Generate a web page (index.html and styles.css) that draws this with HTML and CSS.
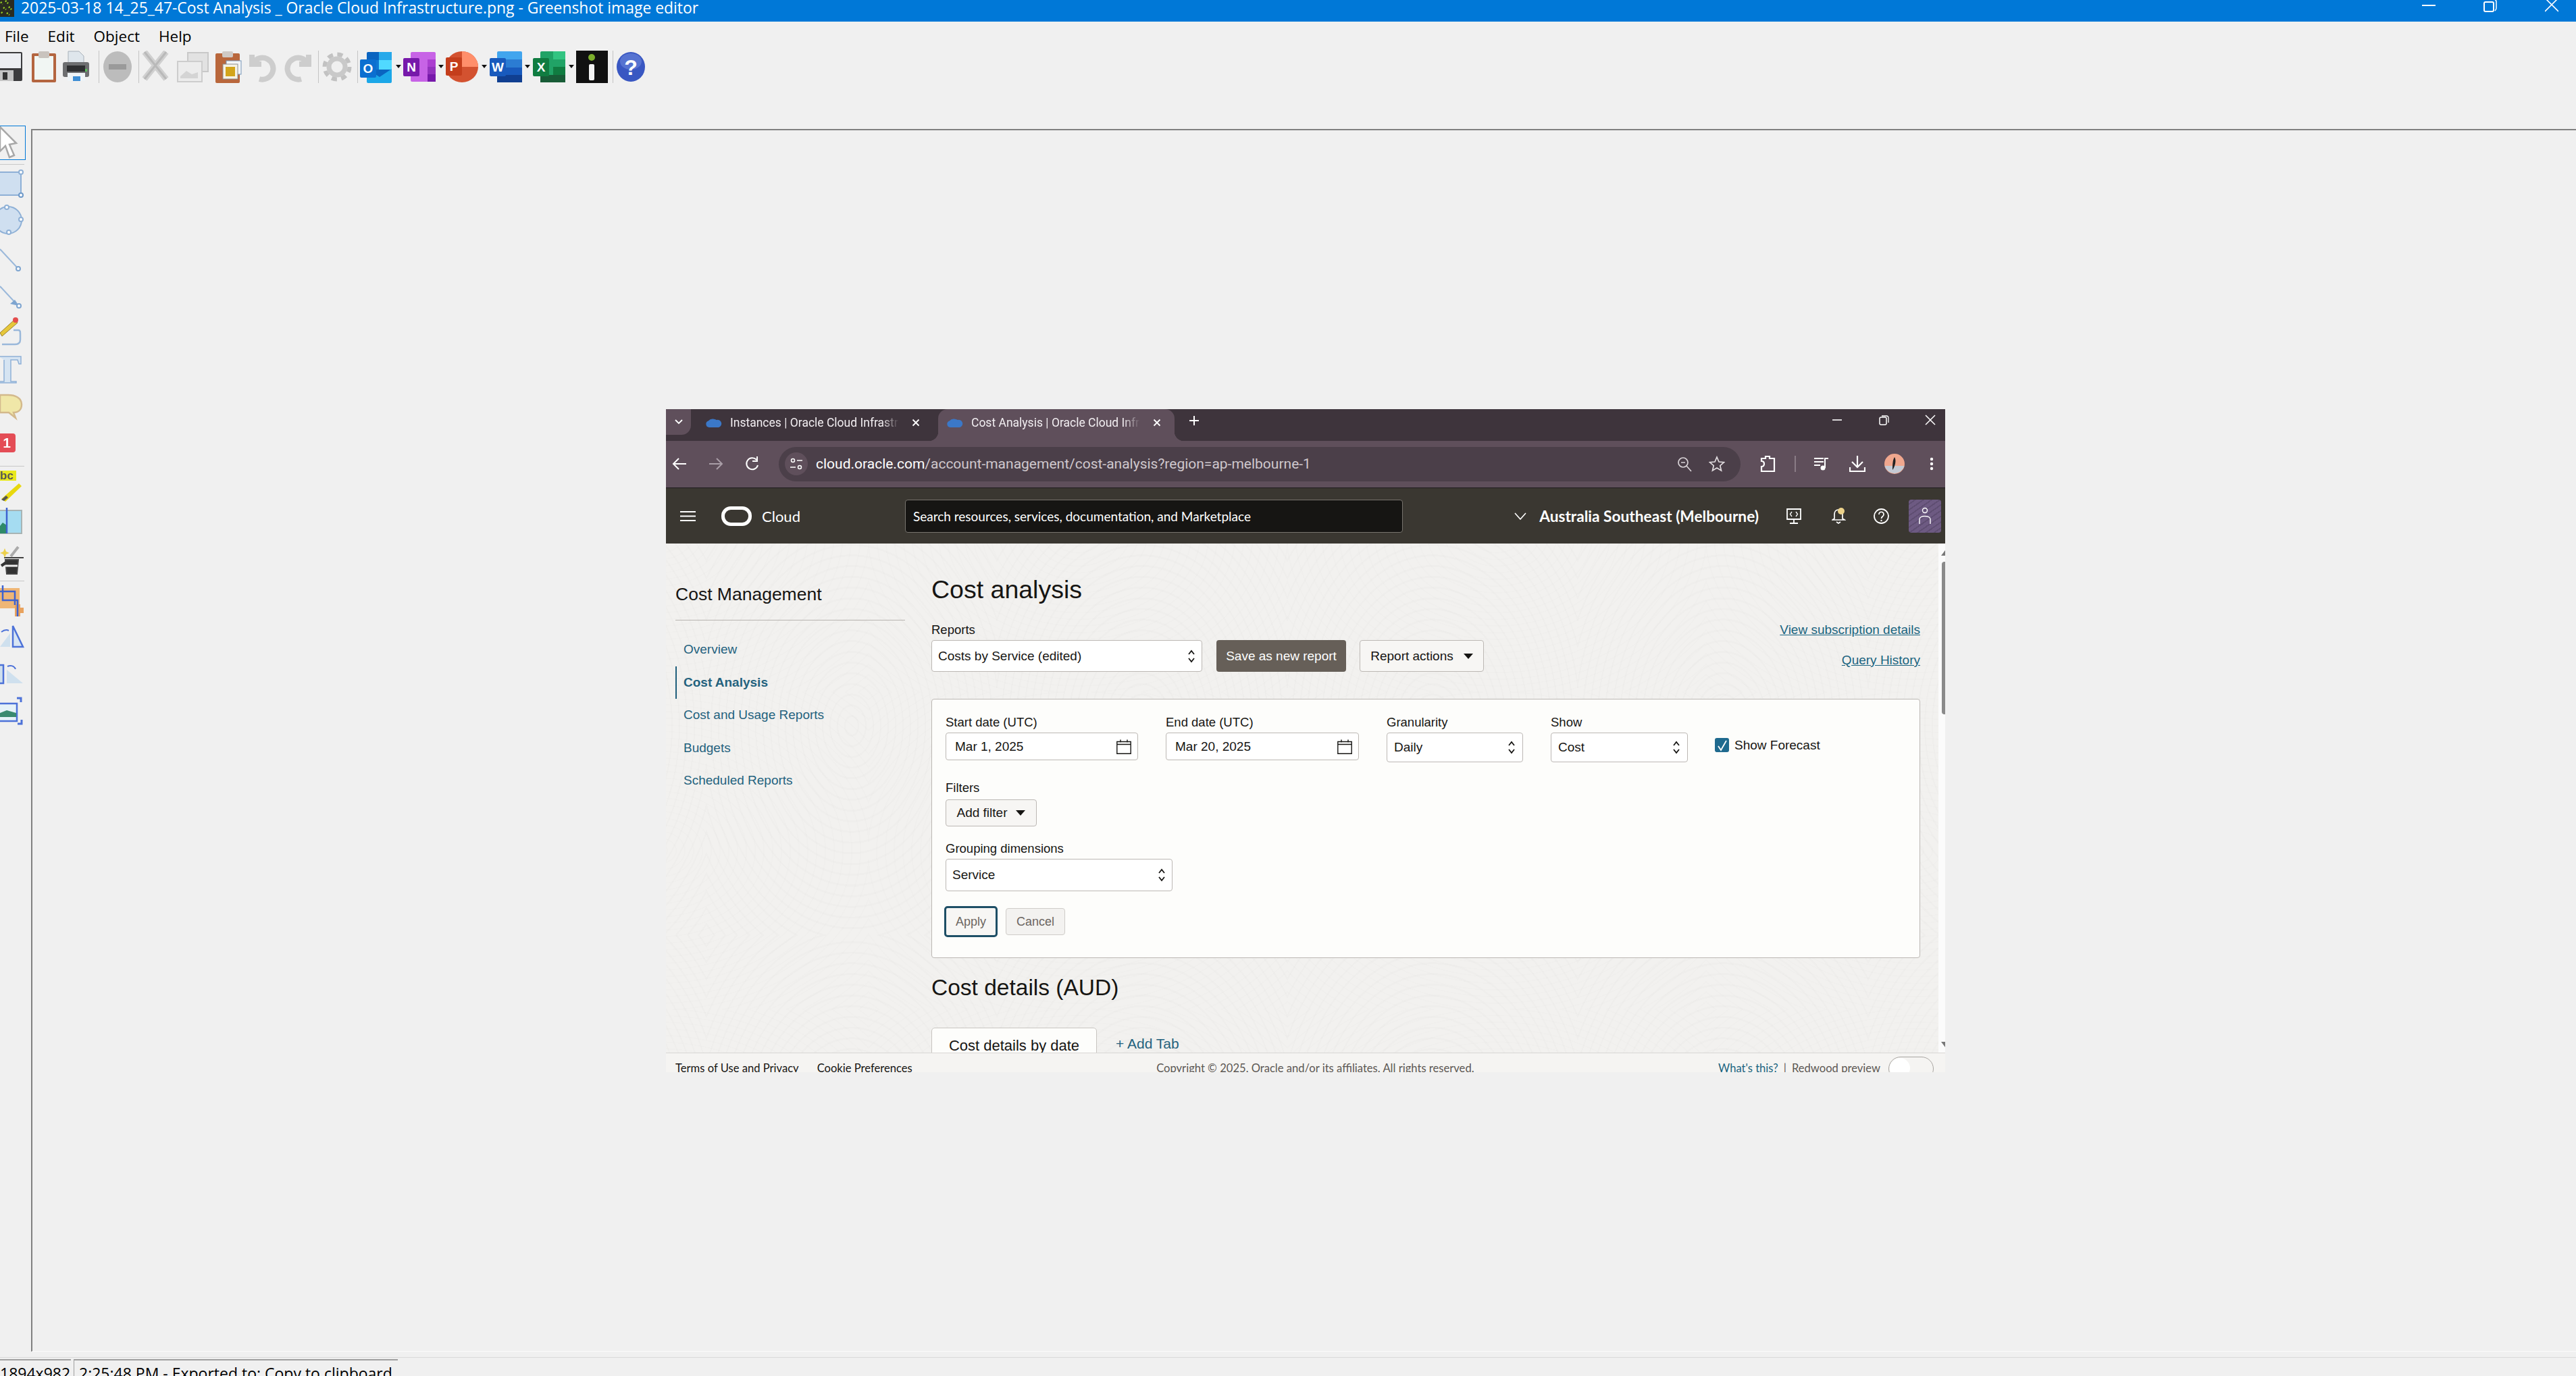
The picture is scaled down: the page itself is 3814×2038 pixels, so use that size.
FILE: index.html
```html
<!DOCTYPE html>
<html lang="en">
<head>
<meta charset="utf-8">
<title>Greenshot image editor</title>
<link rel="stylesheet" href="styles.css">
</head>
<body>
<svg class="defs" width="0" height="0">
  <defs>
    <symbol id="updown" viewBox="0 0 12 22"><path d="M2 8l4-5 4 5M2 14l4 5 4-5" fill="none" stroke="#161513" stroke-width="1.8"/></symbol>
    <symbol id="cal" viewBox="0 0 22 22"><path d="M.8 3.5h20.4v17.7H.8zM.8 7.5h20.4M6 .5v4M16 .5v4" fill="none" stroke="#161513" stroke-width="1.4"/></symbol>
    <symbol id="caret" viewBox="0 0 14 10"><path d="M0 1h14L7 9z" fill="#161513"/></symbol>
    <symbol id="cloudtab" viewBox="0 0 24 14"><path d="M5 14a5 5 0 0 1-1-9.800A8 6 0 0 1 16 3a5.500 5.500 0 0 1 3 11z" fill="#3b78c8"/></symbol>
    <symbol id="tabx" viewBox="0 0 12 12"><path d="M1.500 1.500l9 9M10.500 1.500l-9 9" stroke="#fff" stroke-width="1.800"/></symbol>
    <symbol id="drop" viewBox="0 0 8 6"><path d="M0 0h8L4 5z" fill="#111"/></symbol>
  </defs>
</svg>

<header class="titlebar">
  <svg class="appicon" width="21" height="25" viewBox="0 0 21 25"><rect width="21" height="25" fill="#2a2c22"/><path d="M1 3l3 3M8 1l4 4M5 11l4 3M13 10l4 4M10 19l4 3M2 18l2 2" stroke="#9bd422" stroke-width="2.500" stroke-dasharray="2 2"/></svg>
  <span class="titletext">2025-03-18 14_25_47-Cost Analysis _ Oracle Cloud Infrastructure.png - Greenshot image editor</span>
  <div class="wincontrols">
    <svg width="20" height="20" viewBox="0 0 20 20"><path d="M0 8h20" stroke="#fff" stroke-width="2"/></svg>
    <svg width="20" height="20" viewBox="0 0 20 20"><rect x="1" y="3" width="14" height="14" rx="2" fill="none" stroke="#fff" stroke-width="2"/><path d="M15-1c3 0 4 1 4 4v9c0 2-1 3-2 4" fill="none" stroke="#fff" stroke-width="1.500"/></svg>
    <svg width="20" height="20" viewBox="0 0 20 20"><path d="M0-3l20 20M20-3L0 17" stroke="#fff" stroke-width="1.600"/></svg>
  </div>
</header>

<nav class="menubar">
  <span>File</span><span>Edit</span><span>Object</span><span>Help</span>
</nav>

<div class="toolbar">
  <svg class="gs" width="46" height="48" viewBox="0 0 46 48"><rect x="-6" y="2" width="39" height="43" rx="2" fill="#3b3b3d"/><rect x="-4" y="4" width="35" height="22" fill="#eceef2"/><rect x="-4" y="29" width="24" height="16" fill="#c4c4c4"/><rect x="4" y="32" width="7" height="11" fill="#333"/></svg>
  <svg class="gs" width="47" height="48" viewBox="0 0 47 48"><rect x="1" y="4" width="36" height="43" rx="2" fill="#b4653f"/><rect x="5" y="8" width="28" height="35" fill="#f1f6f3"/><rect x="11" y="1" width="16" height="10" rx="2" fill="#c9c3bd"/></svg>
  <svg class="gs" width="53" height="48" viewBox="0 0 53 48"><path d="M8 1h16l7 7v14H8z" fill="#dfe6ec" stroke="#a7b0b8"/><rect x="0" y="17" width="39" height="22" rx="3" fill="#6d6e70"/><rect x="6" y="22" width="27" height="9" fill="#2e2f31"/><rect x="33" y="27" width="3" height="4" fill="#58c05a"/><rect x="7" y="33" width="26" height="12" fill="#eef3f6"/><rect x="15" y="38" width="11" height="7" fill="#3e8ed4"/></svg>
  <span class="tsep"></span>
  <svg class="gs" width="58" height="48" viewBox="0 0 58 48"><ellipse cx="27" cy="24" rx="21" ry="23" fill="#bcbcbc"/><rect x="14" y="20" width="26" height="8" fill="#9a9a9a"/></svg>
  <span class="tsep"></span>
  <svg class="gs" width="56" height="48" viewBox="0 0 56 48"><path d="M8 2l32 40M40 2L8 42" stroke="#d0d0d0" stroke-width="9"/><path d="M8 2l32 40M40 2L8 42" stroke="#b9b9b9" stroke-width="3"/></svg>
  <svg class="gs" width="56" height="48" viewBox="0 0 56 48"><rect x="16" y="3" width="30" height="28" fill="#e2e2e2" stroke="#c9c9c9" stroke-width="2"/><rect x="1" y="16" width="36" height="30" fill="#ececec" stroke="#cdcdcd" stroke-width="2"/><path d="M5 38l9-8 8 5 9-3v9H5z" fill="#d4d4d4"/></svg>
  <svg class="gs" width="50" height="48" viewBox="0 0 50 48"><rect x="1" y="4" width="36" height="44" rx="2" fill="#b9673c"/><rect x="11" y="1" width="16" height="9" rx="2" fill="#cfc9c4"/><rect x="17" y="15" width="22" height="20" fill="#f4f6f8" stroke="#7796b8"/><rect x="12" y="20" width="22" height="22" fill="#f6f3e5" stroke="#8c8c8c"/><rect x="16" y="24" width="14" height="14" fill="#d3a51b"/></svg>
  <svg class="gs" width="52" height="48" viewBox="0 0 52 48"><path d="M5 6v14h14M7 18a16 16 0 1 1 9 24" fill="none" stroke="#cdcdcd" stroke-width="8"/></svg>
  <svg class="gs" width="51" height="48" viewBox="0 0 51 48"><path d="M37 6v14H23M35 18a16 16 0 1 0-9 24" fill="none" stroke="#cdcdcd" stroke-width="8"/></svg>
  <span class="tsep"></span>
  <svg class="gs" width="57" height="48" viewBox="0 0 57 48"><circle cx="27" cy="24" r="12" fill="none" stroke="#c9c9c9" stroke-width="7"/><circle cx="27" cy="24" r="18.500" fill="none" stroke="#c2c2c2" stroke-width="6" stroke-dasharray="8 6.500"/></svg>
  <span class="tsep"></span>
  <svg width="67" height="48" viewBox="0 0 67 48"><rect x="13" y="2" width="37" height="42" rx="2" fill="#0a64c0"/><rect x="31" y="2" width="19" height="12" fill="#27a9ea"/><rect x="13" y="14" width="18" height="14" fill="#0f78d4"/><rect x="31" y="14" width="19" height="14" fill="#50d9ff"/><path d="M13 27l19 12 18-12v19a2 2 0 0 1-2 2H15a2 2 0 0 1-2-2z" fill="#1ba7e8"/><rect x="3" y="13" width="24" height="27" rx="2" fill="#0b6fd0"/><text class="ofx" x="15" y="33">O</text><use href="#drop" x="56" y="21" width="8" height="6"/></svg>
  <svg width="63" height="48" viewBox="0 0 63 48"><rect x="11" y="2" width="37" height="44" rx="2" fill="#c763e6"/><rect x="36" y="13" width="12" height="11" fill="#ab3fd0"/><rect x="36" y="24" width="12" height="11" fill="#9332bd"/><rect x="36" y="35" width="12" height="11" fill="#7719aa"/><rect x="0" y="11" width="24" height="27" rx="2" fill="#7719aa"/><text class="ofx" x="12" y="31">N</text><use href="#drop" x="52" y="21" width="8" height="6"/></svg>
  <svg width="65" height="48" viewBox="0 0 65 48"><ellipse cx="24" cy="24" rx="24" ry="23" fill="#d35230"/><path d="M24 1a24 23 0 0 1 24 23H24z" fill="#ff8f6b"/><rect x="0" y="10" width="24" height="27" rx="2" fill="#c43e1c"/><text class="ofx" x="12" y="30">P</text><use href="#drop" x="53" y="21" width="8" height="6"/></svg>
  <svg width="64" height="48" viewBox="0 0 64 48"><rect x="11" y="1" width="37" height="46" rx="2" fill="#41a5ee"/><rect x="11" y="13" width="37" height="12" fill="#2b7cd3"/><rect x="11" y="25" width="37" height="11" fill="#185abd"/><rect x="11" y="36" width="37" height="11" fill="#103f91"/><rect x="0" y="11" width="24" height="27" rx="2" fill="#185abd"/><text class="ofx" x="12" y="31">W</text><use href="#drop" x="52" y="21" width="8" height="6"/></svg>
  <svg width="64" height="48" viewBox="0 0 64 48"><rect x="11" y="1" width="37" height="46" rx="2" fill="#21a366"/><rect x="30" y="1" width="18" height="12" fill="#33c481"/><rect x="30" y="24" width="18" height="12" fill="#107c41"/><rect x="11" y="36" width="37" height="11" fill="#185c37"/><rect x="0" y="11" width="24" height="27" rx="2" fill="#107c41"/><text class="ofx" x="12" y="31">X</text><use href="#drop" x="53" y="21" width="8" height="6"/></svg>
  <svg width="54" height="48" viewBox="0 0 54 48"><rect width="47" height="48" fill="#111"/><circle cx="23" cy="10" r="5" fill="#7cae2c"/><rect x="19" y="20" width="8" height="24" rx="2" fill="#f4f4f4"/></svg>
  <span class="tsep"></span>
  <svg width="47" height="48" viewBox="0 0 47 48"><ellipse cx="26" cy="24" rx="21" ry="22" fill="#3957c2"/><ellipse cx="26" cy="16" rx="16" ry="12" fill="#6b85da" opacity=".6"/><text class="helpq" x="26" y="36">?</text></svg>
</div>

<div class="workspace">
  <aside class="toolbox">
    <div class="toolbtn"><svg class="gs" width="36" height="48" viewBox="0 187 36 48"><path d="M0 188l24 24-10 2 7 16-7 3-6-17-8 8z" fill="#fff" stroke="#a8a8a8" stroke-width="2.500"/></svg></div>
    <span class="boxsep"></span>
    <svg class="gs" width="46" height="56" viewBox="0 244 46 56"><rect x="-6" y="255" width="37" height="34" fill="#cfdff0" stroke="#8eb0d6" stroke-width="2"/><circle cx="31" cy="255" r="3" fill="#fff" stroke="#8eb0d6" stroke-width="2"/><circle cx="31" cy="289" r="3" fill="#fff" stroke="#6e99c9" stroke-width="2"/></svg>
    <svg class="gs" width="46" height="60" viewBox="0 300 46 60"><circle cx="12" cy="326" r="20" fill="#cfdff0" stroke="#8eb0d6" stroke-width="2"/><circle cx="10" cy="307" r="3" fill="#fff" stroke="#8eb0d6" stroke-width="2"/><circle cx="31" cy="325" r="3" fill="#fff" stroke="#8eb0d6" stroke-width="2"/><circle cx="13" cy="344" r="3" fill="#fff" stroke="#8eb0d6" stroke-width="2"/></svg>
    <svg class="gs" width="46" height="55" viewBox="0 360 46 55"><path d="M0 369l27 29" stroke="#9ab8da" stroke-width="2"/><circle cx="27" cy="398" r="3" fill="#fff" stroke="#7ea5d0" stroke-width="2"/></svg>
    <svg class="gs" width="46" height="50" viewBox="0 415 46 50"><path d="M0 424l27 29" stroke="#9ab8da" stroke-width="2"/><path d="M22 444l-7 6 13 3z" fill="#7ea5d0"/><circle cx="28" cy="453" r="3" fill="#fff" stroke="#7ea5d0" stroke-width="2"/></svg>
    <svg class="gs" width="46" height="57" viewBox="0 465 46 57"><path d="M20 489h7c3 0 3 2 3 6v8c0 5-3 7-8 7H3" fill="none" stroke="#9ab8da" stroke-width="2.500"/><path d="M0 493l22-20 4 5L3 498z" fill="#e6c73a" stroke="#9b8030"/><circle cx="23" cy="474" r="4" fill="#e44d4d"/></svg>
    <svg class="gs" width="46" height="56" viewBox="0 522 46 56"><path d="M-2 528h33v11h-3l-2-6H16v32h8v2H-2v-2h8v-32" fill="#d6e4f2" stroke="#8eb0d6" stroke-width="1.500"/></svg>
    <svg class="gs" width="46" height="58" viewBox="0 578 46 58"><path d="M12 585c10 0 20 4 20 14 0 9-6 12-12 12l3 8-10-8H0v-26z" fill="#f0e7a8" stroke="#d3b98c" stroke-width="2.500"/></svg>
    <svg class="gs" width="46" height="54" viewBox="0 636 46 54"><rect x="-6" y="642" width="29" height="28" rx="4" fill="#e44d56"/><text class="counter" x="10" y="663">1</text></svg>
    <span class="boxsep boxsep-flush"></span>
    <svg class="gs" width="46" height="59" viewBox="0 691 46 59"><rect x="-2" y="697" width="26" height="15" fill="#e8e81e"/><text class="abc" x="0" y="710">bc</text><path d="M2 739l26-23 4 4-24 23z" fill="#e8d80e"/><path d="M2 740l7-6 3 3-6 5z" fill="#555"/></svg>
    <svg class="gs" width="46" height="50" viewBox="0 750 46 50"><rect x="-4" y="756" width="36" height="34" fill="#a5dcf1" stroke="#a8b4b4" stroke-width="2"/><path d="M-4 784l8-10 6 4v12h-14z" fill="#2e8a68"/><path d="M10 752v38" stroke="#3d62d0" stroke-width="2.500"/></svg>
    <svg class="gs" width="46" height="60" viewBox="0 800 46 60"><path d="M6 826h29M8 829h19l-2 21H10z" fill="#333" stroke="#444" stroke-width="2"/><path d="M8 838h18" stroke="#eee" stroke-width="3"/><path d="M16 824l11-14" stroke="#aaa" stroke-width="4"/><path d="M7 812l2 5 5 2-5 2-2 5-2-5-5-2 5-2z" fill="#ecd04c"/><path d="M2 838l7-5" stroke="#333" stroke-width="4"/></svg>
    <span class="boxsep boxsep-flush"></span>
    <svg class="gs" width="46" height="61" viewBox="0 861 46 61"><rect x="-4" y="871" width="33" height="30" fill="#efb676"/><path d="M22 900h13v8H22zM22 895h8v18h-8z" fill="#e8a25e"/><path d="M4 867v22h22v24M-4 876h26v20" fill="none" stroke="#3d62d0" stroke-width="2.500"/></svg>
    <svg class="gs" width="46" height="55" viewBox="0 922 46 55"><path d="M0 958l15-20v20z" fill="#cfe0ee"/><path d="M19 927v31h15z" fill="#d8e5f3" stroke="#4d72d8" stroke-width="2.500"/><path d="M2 936c4-3 7-4 11-2" fill="none" stroke="#4d72d8" stroke-width="2"/></svg>
    <svg class="gs" width="46" height="50" viewBox="0 977 46 50"><path d="M0 985h5v27H0" fill="#cfe0ee" stroke="#4d72d8" stroke-width="2.500"/><path d="M10 992l24 20H10z" fill="#cfe0ee"/><path d="M11 987c5-2 10-1 12 4" fill="none" stroke="#4d72d8" stroke-width="2"/></svg>
    <svg class="gs" width="46" height="53" viewBox="0 1027 46 53"><rect x="-4" y="1042" width="29" height="26" fill="#e6f2f8" stroke="#4d72d8" stroke-width="2.500"/><path d="M0 1056l10-4 14 4v6H0z" fill="#3a8a70"/><path d="M25 1034h6v6M32 1066v6h-6" fill="none" stroke="#4d72d8" stroke-width="3"/></svg>
  </aside>

  <main class="canvas">
    <section class="browser">
      <div class="tabstrip">
        <div class="tabmenu"><svg width="12" height="8" viewBox="0 0 12 8"><path d="M1 1l5 5 5-5" fill="none" stroke="#fff" stroke-width="1.800"/></svg></div>
        <div class="tab">
          <svg class="favicon" width="24" height="14"><use href="#cloudtab"/></svg>
          <span class="tabtitle">Instances | Oracle Cloud Infrastructure</span>
          <svg class="tabclose" width="12" height="12"><use href="#tabx"/></svg>
        </div>
        <div class="tab tab-active">
          <svg class="favicon" width="24" height="14"><use href="#cloudtab"/></svg>
          <span class="tabtitle">Cost Analysis | Oracle Cloud Infrastructure</span>
          <svg class="tabclose" width="12" height="12"><use href="#tabx"/></svg>
        </div>
        <svg class="newtab" width="16" height="16" viewBox="0 0 16 16"><path d="M8 1v14M1 8h14" stroke="#fff" stroke-width="2"/></svg>
        <div class="chromectl">
          <svg width="16" height="16" viewBox="0 0 16 16"><path d="M1 8h14" stroke="#fff" stroke-width="1.600"/></svg>
          <svg width="16" height="16" viewBox="0 0 16 16"><rect x="2" y="4" width="10" height="11" rx="2" fill="none" stroke="#fff" stroke-width="1.500"/><path d="M5 2h7c2 0 3 1 3 3v7" fill="none" stroke="#fff" stroke-width="1.300"/></svg>
          <svg width="16" height="16" viewBox="0 0 16 16"><path d="M1 1l14 14M15 1L1 15" stroke="#fff" stroke-width="1.500"/></svg>
        </div>
      </div>

      <div class="omnirow">
        <svg width="24" height="24" viewBox="0 0 24 24"><path d="M22 12H3M11 4l-8 8 8 8" fill="none" stroke="#fff" stroke-width="2"/></svg>
        <svg width="24" height="24" viewBox="0 0 24 24"><path d="M2 12h19M13 4l8 8-8 8" fill="none" stroke="#a99ea7" stroke-width="2"/></svg>
        <svg width="24" height="24" viewBox="0 0 24 24"><path d="M20 14a8.500 8.500 0 1 1-2-8M19 1v7h-7" fill="none" stroke="#fff" stroke-width="2"/></svg>
        <div class="omnibox">
          <div class="siteinfo"><svg width="20" height="20" viewBox="0 0 20 20"><circle cx="5" cy="5" r="2.500" fill="none" stroke="#fff" stroke-width="1.500"/><path d="M11 5h8M1 15h8" stroke="#fff" stroke-width="1.500"/><circle cx="15" cy="15" r="2.500" fill="none" stroke="#fff" stroke-width="1.500"/></svg></div>
          <span class="url"><b>cloud.oracle.com</b>/account-management/cost-analysis?region=ap-melbourne-1</span>
          <svg class="omni-end" width="24" height="24" viewBox="0 0 24 24"><circle cx="10" cy="10" r="7" fill="none" stroke="#d8d2d6" stroke-width="1.700"/><path d="M15 15l7 8M7 10h6" stroke="#d8d2d6" stroke-width="1.700"/></svg>
          <svg width="24" height="24" viewBox="0 0 24 24"><path d="M12 2l3 7 7.500.7-5.700 5 1.700 7.300-6.500-3.900L5.500 22l1.700-7.300-5.700-5L9 9z" fill="none" stroke="#e2dde0" stroke-width="1.700"/></svg>
        </div>
        <svg class="ext" width="24" height="26" viewBox="0 0 24 26"><path d="M2 5h6V2h6v3h7v19H2v-7c3 0 4-1 4-4s-1-4-4-4z" fill="none" stroke="#fff" stroke-width="2.200"/></svg>
        <span class="omnisep"></span>
        <svg class="media" width="24" height="24" viewBox="0 0 24 24"><path d="M1 4h14M1 9h14M1 14h9M22 4h-5v14" fill="none" stroke="#fff" stroke-width="2"/><circle cx="14" cy="18" r="3.500" fill="#fff"/></svg>
        <svg class="dl" width="24" height="26" viewBox="0 0 24 26"><path d="M12 1v16M4 10l8 8 8-8M1 18v6h22v-6" fill="none" stroke="#fff" stroke-width="2.200"/></svg>
        <svg class="me" width="30" height="30" viewBox="0 0 30 30"><circle cx="15" cy="15" r="15" fill="#f0a78e"/><path d="M.5 18h29A15 15 0 0 1 .5 18z" fill="#c4cad4"/><path d="M15 5c3 4 1 14-3 19 0-7 0-14 3-19z" fill="#222"/></svg>
        <svg class="dots" width="24" height="24" viewBox="0 0 24 24"><circle cx="12" cy="5" r="2.200" fill="#fff"/><circle cx="12" cy="12" r="2.200" fill="#fff"/><circle cx="12" cy="19" r="2.200" fill="#fff"/></svg>
      </div>

      <div class="ociheader">
        <div class="brand">
          <svg class="burger" width="23" height="15" viewBox="0 0 23 15"><path d="M0 1h23M0 7.500h23M0 14h23" stroke="#fff" stroke-width="2"/></svg>
          <svg class="ologo" width="45" height="29" viewBox="0 0 45 29"><rect x="2.500" y="2.500" width="40" height="24" rx="11.500" fill="none" stroke="#fff" stroke-width="5"/></svg>
          <span class="cloudword">Cloud</span>
        </div>
        <div class="searchbox">Search resources, services, documentation, and Marketplace</div>
        <div class="ociright">
          <svg class="regionchev" width="18" height="11" viewBox="0 0 18 11"><path d="M1 1l8 9 8-9" fill="none" stroke="#fff" stroke-width="1.600"/></svg>
          <span class="region">Australia Southeast (Melbourne)</span>
          <svg class="ico-dev" width="22" height="23" viewBox="0 0 22 23"><path d="M1 1h20v15H1zM11 16v6M5 22h12" fill="none" stroke="#fff" stroke-width="1.800"/><path d="M8 5L5.500 8.500 8 12M14 5l2.500 3.500L14 12" fill="none" stroke="#fff" stroke-width="1.300"/></svg>
          <svg class="ico-bell" width="21" height="24" viewBox="0 0 21 24"><path d="M10 3c-4 0-6 3-6 7v6l-3 2h18l-3-2v-6c0-4-2-7-6-7zM7 21l3 2 3-2" fill="none" stroke="#fff" stroke-width="1.700"/><circle cx="14" cy="5" r="5" fill="#ecd28a"/></svg>
          <svg class="ico-help" width="23" height="23" viewBox="0 0 23 23"><circle cx="11.500" cy="11.500" r="10.500" fill="none" stroke="#fff" stroke-width="1.800"/><path d="M8 9c0-5 7-5 7 0 0 3-3.500 3-3.500 6" fill="none" stroke="#fff" stroke-width="1.700"/><circle cx="11.500" cy="18" r="1.200" fill="#fff"/></svg>
          <div class="avatar"><svg width="18" height="26" viewBox="0 0 18 26"><circle cx="9" cy="5" r="3.500" fill="none" stroke="#fff" stroke-width="1.400"/><path d="M1 25v-7c0-6 16-6 16 0v7" fill="none" stroke="#fff" stroke-width="1.400"/></svg></div>
        </div>
      </div>

      <div class="pagebody">
        <div class="sidebar">
          <h2 class="sidetitle">Cost Management</h2>
          <ul class="sidenav">
            <li>Overview</li>
            <li class="current">Cost Analysis</li>
            <li>Cost and Usage Reports</li>
            <li>Budgets</li>
            <li>Scheduled Reports</li>
          </ul>
        </div>
        <div class="pagemain">
          <h1 class="pagetitle">Cost analysis</h1>
          <div class="reportrow">
            <div class="field">
              <label class="lbl">Reports</label>
              <div class="control select w-report">Costs by Service (edited)<svg class="updown" width="12" height="22"><use href="#updown"/></svg></div>
            </div>
            <div class="btn btn-primary">Save as new report</div>
            <div class="btn btn-menu">Report actions<svg width="14" height="10"><use href="#caret"/></svg></div>
            <div class="sidelinks">
              <a>View subscription details</a>
              <a>Query History</a>
            </div>
          </div>
          <div class="card">
            <div class="filterrow">
              <div class="field w-date1">
                <label class="lbl">Start date (UTC)</label>
                <div class="control dateinput">Mar 1, 2025<svg width="22" height="22"><use href="#cal"/></svg></div>
              </div>
              <div class="field w-date2">
                <label class="lbl">End date (UTC)</label>
                <div class="control dateinput">Mar 20, 2025<svg width="22" height="22"><use href="#cal"/></svg></div>
              </div>
              <div class="field w-gran">
                <label class="lbl">Granularity</label>
                <div class="control select short">Daily<svg class="updown" width="12" height="22"><use href="#updown"/></svg></div>
              </div>
              <div class="field w-show">
                <label class="lbl">Show</label>
                <div class="control select short">Cost<svg class="updown" width="12" height="22"><use href="#updown"/></svg></div>
              </div>
              <div class="forecast">
                <span class="checkbox"><svg width="16" height="18" viewBox="0 0 16 18"><path d="M2 10l4 6 8-14" fill="none" stroke="#fff" stroke-width="1.800"/></svg></span>
                <span>Show Forecast</span>
              </div>
            </div>
            <label class="lbl lbl-filters">Filters</label>
            <div class="btn btn-menu btn-filter">Add filter<svg width="14" height="10"><use href="#caret"/></svg></div>
            <label class="lbl lbl-group">Grouping dimensions</label>
            <div class="control select w-group">Service<svg class="updown" width="12" height="22"><use href="#updown"/></svg></div>
            <div class="actions">
              <div class="btn btn-apply">Apply</div>
              <div class="btn btn-cancel">Cancel</div>
            </div>
          </div>
          <h3 class="sectiontitle">Cost details (AUD)</h3>
          <div class="tabrow">
            <div class="detailtab">Cost details by date</div>
            <a class="addtab">+ Add Tab</a>
          </div>
        </div>
        <div class="pagescroll">
          <svg width="10" height="10" viewBox="0 0 10 10"><path d="M10 2v8H4z" fill="#777"/></svg>
          <span class="thumb"></span>
          <svg class="scrolldown" width="10" height="10" viewBox="0 0 10 10"><path d="M10 8V0H4z" fill="#777"/></svg>
        </div>
      </div>

      <footer class="pagefoot">
        <span>Terms of Use and Privacy</span>
        <span class="foot-cookie">Cookie Preferences</span>
        <span class="foot-copy">Copyright © 2025, Oracle and/or its affiliates. All rights reserved.</span>
        <a class="foot-whats">What's this?</a>
        <span class="foot-bar">|</span>
        <span class="foot-red">Redwood preview</span>
        <span class="toggle"><span class="knob"></span></span>
      </footer>
    </section>
  </main>
</div>

<div class="statusbar">
  <span class="cell cell-size">1894x982</span>
  <span class="cell cell-msg">2:25:48 PM - Exported to: Copy to clipboard</span>
</div>
</body>
</html>
```

FILE: styles.css
```css
* { box-sizing: border-box; }
html, body { margin: 0; height: 100%; }
body {
  width: 3814px;
  height: 2038px;
  overflow: hidden;
  display: flex;
  flex-direction: column;
  background: #f0f0f0;
  font-family: "Open Sans", "Liberation Sans", sans-serif;
  color: #000;
}
svg { display: block; flex: none; }
.defs { position: absolute; }
.gs { filter: blur(.6px); }

/* Greenshot window */
.titlebar { height: 32px; flex: none; display: flex; background: #0078d7; color: #fff; overflow: hidden; }
.titletext { margin-left: 10px; font-size: 22.900px; line-height: 24px; white-space: nowrap; }
.wincontrols { margin-left: auto; display: flex; gap: 71px; padding-right: 26px; }
.menubar { height: 43px; flex: none; display: flex; align-items: center; font-size: 22.500px; padding-left: 7px; gap: 28px; }
.toolbar { height: 48px; flex: none; display: flex; }
.tsep { width: 1px; height: 48px; background: #c4c4c4; flex: none; }
.ofx { font: 700 19px "Liberation Sans", sans-serif; fill: #fff; text-anchor: middle; }
.helpq { font: 700 32px "Liberation Sans", sans-serif; fill: #fff; text-anchor: middle; }
.counter { font: 700 21px "Liberation Sans", sans-serif; fill: #fff; text-anchor: middle; }
.abc { font: 700 17px "Liberation Sans", sans-serif; fill: #555; }

.workspace { flex: 1; min-height: 0; display: flex; padding-top: 63px; }
.toolbox { width: 46px; flex: none; display: flex; flex-direction: column; }
.toolbtn { width: 38px; height: 51px; flex: none; border: 1.500px solid #0078d7; border-left: 0; }
.boxsep { height: 1px; width: 36px; margin-top: 6px; background: #c8c8c8; flex: none; }
.boxsep-flush { margin-top: 0; }
.canvas {
  flex: 1; min-width: 0;
  margin-top: 5px;
  border-top: 2px solid #808080;
  border-left: 2px solid #808080;
  border-bottom: 1px solid #fbfbfb;
  padding: 413px 0 0 938px;
  overflow: hidden;
}
.statusbar {
  height: 28px; flex: none;
  margin-top: 8px;
  border-top: 1px solid #d9d9d9;
  padding-top: 2px;
  display: flex; gap: 4px;
  font-size: 23px; line-height: 28px;
  overflow: hidden;
}
.cell { border-top: 2px solid #a0a0a0; border-left: 1px solid #a0a0a0; white-space: nowrap; padding: 5px 0 0 7px; }
.cell-size { width: 105px; padding-left: 0; border-left: 0; }
.cell-msg { width: 480px; }

/* Browser chrome */
.browser { width: 1894px; height: 982px; display: flex; flex-direction: column; font-family: "Liberation Sans", sans-serif; }
.tabstrip { height: 47px; flex: none; display: flex; background: #3e343c; color: #f2eef1; font-family: "Roboto", sans-serif; font-size: 17.500px; }
.tabmenu { width: 37px; height: 38px; background: #5f4f5b; border-radius: 0 0 14px 0; display: flex; align-items: center; justify-content: center; }
.tab { position: relative; width: 366px; display: flex; align-items: center; padding: 0 0 8px 22px; border-radius: 14px 14px 0 0; }
.tab-active { width: 350px; background: #5f4f5b; padding-left: 13px; }
.tab-active::before, .tab-active::after { content: ""; position: absolute; bottom: 0; width: 14px; height: 14px; }
.tab-active::before { left: -14px; background: radial-gradient(circle at 0 0, transparent 14px, #5f4f5b 14.500px); }
.tab-active::after { right: -14px; background: radial-gradient(circle at 100% 0, transparent 14px, #5f4f5b 14.500px); }
.tabtitle { width: 250px; margin-left: 12px; overflow: hidden; white-space: nowrap; -webkit-mask-image: linear-gradient(90deg, #000 90%, transparent); mask-image: linear-gradient(90deg, #000 90%, transparent); }
.tabclose { margin-left: 19px; }
.newtab { margin: 9px 0 0 21px; }
.chromectl { margin-left: auto; display: flex; gap: 53px; padding: 8px 14px 0 0; }
.omnirow { height: 70px; flex: none; display: flex; align-items: center; padding: 0 0 1px 8px; gap: 30px; background: #5f4f5b; border-bottom: 1px solid #201c1f; }
.omnibox { width: 1424px; height: 51px; margin-left: -3px; display: flex; align-items: center; gap: 24px; padding-right: 23px; background: #4b3f49; border-radius: 26px; }
.siteinfo { width: 34px; height: 34px; margin-left: 9px; margin-right: -12px; background: #5f4f5b; border-radius: 50%; display: flex; align-items: center; justify-content: center; }
.url { font-family: "Roboto", sans-serif; font-size: 21px; color: #cfc8cd; white-space: nowrap; }
.url b { font-weight: 400; color: #fff; }
.omni-end { margin-left: auto; }
.ext { margin-left: -1px; }
.omnisep { width: 2px; height: 24px; margin: 0 -3px; background: #8a7c86; flex: none; }
.media { margin-left: -1px; }
.dl { margin-left: -1px; }
.me { margin-left: -2px; }
.dots { margin-left: -2px; }

/* OCI header */
.ociheader { height: 82px; flex: none; display: flex; align-items: center; background: #3a3731; color: #fff; font-family: "Lato", sans-serif; }
.brand { width: 354px; display: flex; align-items: center; padding-left: 21px; }
.ologo { margin-left: 38px; }
.cloudword { margin-left: 15px; font-size: 22px; }
.searchbox { width: 737px; height: 49px; display: flex; align-items: center; padding-left: 11px; background: #161513; border: 1px solid #77736d; border-radius: 4px; font-size: 19px; }
.ociright { margin-left: auto; display: flex; align-items: center; padding-right: 6px; }
.region { margin-left: 19px; font-size: 22.700px; font-weight: 700; }
.ico-dev { margin-left: 41px; }
.ico-bell { margin-left: 45px; }
.ico-help { margin-left: 41px; }
.avatar {
  width: 48px; height: 49px; margin-left: 29px; border-radius: 4px;
  display: flex; align-items: center; justify-content: center;
  background: repeating-linear-gradient(-35deg, #6d5a82 0 5px, #5f4e72 5px 7px);
}

/* Page body */
.pagebody {
  flex: 1; min-height: 0; display: flex; overflow: hidden;
  color: #161513;
  font-size: 19px;
  background-color: #f2f1ef;
  background-image:
    repeating-radial-gradient(ellipse at center, transparent 0 9px, rgba(0,0,0,.011) 9px 11px),
    repeating-radial-gradient(ellipse at center, transparent 0 11px, rgba(0,0,0,.008) 11px 13px);
  background-size: 430px 620px, 620px 470px;
  background-position: 60px -40px, 300px 220px;
}
.sidebar { width: 393px; flex: none; padding: 59px 0 0 14px; }
.sidetitle { margin: 0; width: 340px; height: 55px; border-bottom: 1px solid #b8b4b0; font-size: 26.500px; line-height: 32px; font-weight: 400; }
.sidenav { list-style: none; margin: 19px 0 0; padding: 0; color: #24627e; }
.sidenav li { height: 48.500px; line-height: 47px; border-left: 2px solid transparent; padding-left: 10px; font-size: 19px; }
.sidenav .current { font-weight: 700; border-left-color: #1f5f7c; }
.pagemain { width: 1464px; flex: none; padding-top: 46px; }
.pagetitle { margin: 0; height: 44px; font-size: 37.500px; line-height: 44px; font-weight: 400; }
.reportrow { margin-top: 28px; display: flex; align-items: flex-end; }
.field { display: flex; flex-direction: column; flex: none; }
.lbl { display: block; height: 20px; line-height: 20px; margin-bottom: 5px; font-size: 18.500px; white-space: nowrap; }
.control { display: flex; align-items: center; background: #fff; border: 1px solid #bcb8b4; border-radius: 4px; color: #161513; white-space: nowrap; }
.select { height: 47px; padding: 0 9px; justify-content: space-between; }
.select.short { height: 44px; padding: 0 10px; }
.w-report { width: 401px; }
.w-date1 { width: 285px; }
.w-date2 { width: 286px; }
.w-gran { width: 202px; }
.w-show { width: 203px; }
.w-group { width: 336px; height: 48px; }
.dateinput { height: 41px; padding: 0 9px 0 13px; justify-content: space-between; }
.btn { display: flex; align-items: center; justify-content: center; border-radius: 4px; white-space: nowrap; flex: none; }
.btn-primary { width: 192px; height: 47px; margin-left: 21px; background: #665f58; color: #fff; }
.btn-menu { width: 184px; height: 47px; margin-left: 20px; gap: 15px; background: #f7f6f4; border: 1px solid #bcb8b4; }
.sidelinks { margin-left: auto; align-self: stretch; display: flex; flex-direction: column; align-items: flex-end; gap: 25px; }
.sidelinks a { line-height: 20px; color: #1a6480; text-decoration: underline; }
.card { width: 1464px; height: 384px; margin-top: 40px; padding: 24px 0 0 20px; background: #fdfdfb; border: 1px solid #bcb8b4; border-radius: 4px; }
.filterrow { display: flex; gap: 41px; }
.forecast { display: flex; align-items: center; gap: 8px; height: 21px; margin-top: 33px; margin-left: -1px; font-size: 19px; }
.checkbox { width: 21px; height: 21px; background: #1f6a8e; border-radius: 3px; display: flex; align-items: center; justify-content: center; }
.lbl-filters { margin: 28px 0 7px; }
.btn-filter { width: 135px; height: 40px; margin-left: 0; gap: 13px; }
.lbl-group { margin: 23px 0 5px; }
.actions { margin: 22px 0 0 -2px; display: flex; align-items: center; gap: 12px; }
.btn-apply { width: 79px; height: 46px; background: #f7f6f4; color: #6b6560; border: 3px solid #1e4f66; border-radius: 5px; font-size: 18px; }
.btn-cancel { width: 88px; height: 40px; background: #f3f2f0; color: #6b6560; border: 1px solid #cfccc8; font-size: 18px; }
.sectiontitle { margin: 24px 0 0; height: 40px; font-size: 33.500px; line-height: 40px; font-weight: 400; }
.tabrow { margin-top: 39px; display: flex; }
.detailtab { width: 245px; height: 60px; padding-top: 14px; text-align: center; background: #fdfdfb; border: 1px solid #c8c5c1; border-radius: 5px 5px 0 0; font-size: 22px; line-height: 24px; }
.addtab { margin: 10px 0 0 28px; font-size: 21px; line-height: 28px; color: #24627e; }
.pagescroll { margin-left: 27px; width: 10px; flex: 1; background: #fbfbfb; display: flex; flex-direction: column; padding-top: 8px; }
.thumb { width: 5px; height: 226px; margin: 9px 0 0 5px; background: #8a8a8a; border-radius: 4px 0 0 4px; }
.scrolldown { margin-top: auto; margin-bottom: 6px; }
.pagefoot {
  height: 29px; flex: none; display: flex; align-items: flex-start;
  padding: 0 17px 0 14px;
  overflow: hidden;
  background: #f5f4f2; border-top: 1px solid #d8d6d4;
  font-family: "Lato", sans-serif; font-size: 16.600px; line-height: 18px; color: #161513; white-space: nowrap;
}
.pagefoot > span:not(.toggle), .pagefoot > a { margin-top: 13px; }
.foot-cookie { margin-left: 27px; }
.foot-copy { margin-left: auto; color: #5c5854; }
.foot-whats { margin-left: auto; color: #1a6480; }
.foot-bar { margin-left: 8px; color: #5c5854; }
.foot-red { margin-left: 8px; color: #5c5854; }
.toggle { margin: 5px 0 0 12px; width: 67px; height: 36px; border: 1px solid #a8a5a1; border-radius: 18px; background: #f5f4f2; display: block; padding: 1px 0 0 1px; }
.knob { display: block; width: 30px; height: 30px; border-radius: 50%; background: #fff; }
```
